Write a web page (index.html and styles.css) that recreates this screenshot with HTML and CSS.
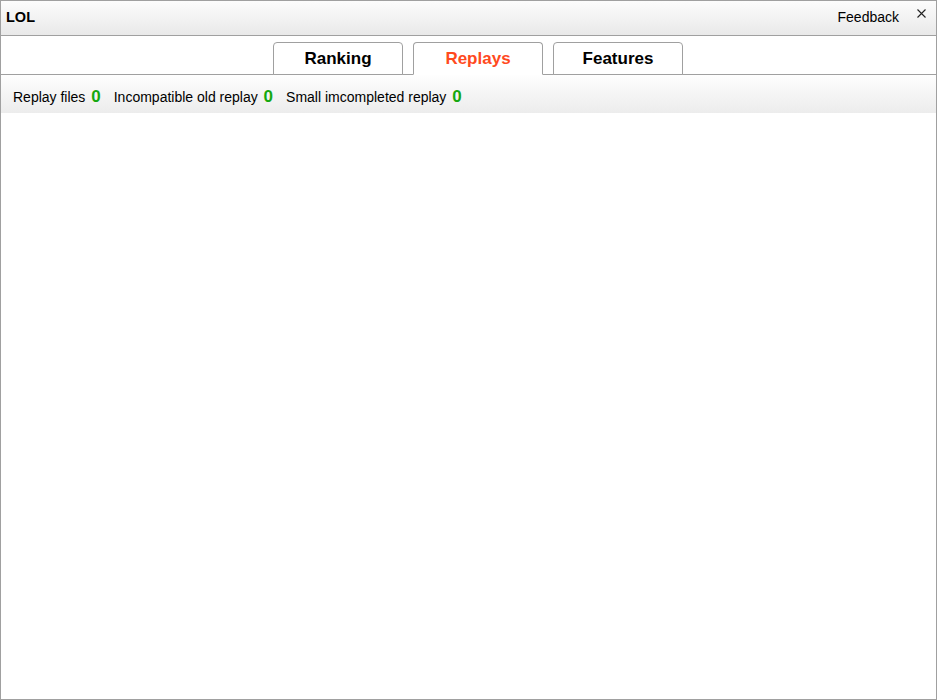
FILE: index.html
```html
<!DOCTYPE html>
<html lang="en">
<head>
<meta charset="UTF-8" />
<title>LOL</title>
<link rel="stylesheet" href="styles.css">
</head>
<body>
<div class="window">
  <div class="titlebar">
    <span class="title">LOL</span>
    <span class="feedback">Feedback</span>
    <span class="close" aria-label="Close">
      <svg width="9" height="9" viewBox="0 0 9 9"><path d="M0.5 0.5 L8.5 8.5 M8.5 0.5 L0.5 8.5" stroke="#222" stroke-width="1.1" fill="none"/></svg>
    </span>
  </div>
  <div class="tabs">
    <div class="tab">Ranking</div>
    <div class="tab active">Replays</div>
    <div class="tab">Features</div>
  </div>
  <div class="stats">
    <span class="stat">Replay files <b>0</b></span>
    <span class="stat">Incompatible old replay <b>0</b></span>
    <span class="stat">Small imcompleted replay <b>0</b></span>
  </div>
  <div class="content"></div>
</div>
</body>
</html>
```
FILE: styles.css
```css
* {
  box-sizing: border-box;
}
body {
  margin: 0;
  font-family: "Liberation Sans", Arial, sans-serif;
  color: #000;
  background: #fff;
}
.window {
  width: 937px;
  height: 700px;
  border: 1px solid #a0a0a0;
  display: flex;
  flex-direction: column;
  background: #fff;
}
.titlebar {
  height: 35px;
  flex: none;
  display: flex;
  align-items: flex-start;
  border-bottom: 1px solid #a0a0a0;
  background: linear-gradient(#fcfcfc, #e9e9e9);
}
.title {
  font-weight: 700;
  font-size: 14.5px;
  margin: 8px 0 0 5px;
}
.feedback {
  margin: 8px 0 0 auto;
  font-size: 14px;
}
.close {
  display: flex;
  margin: 8px 10px 0 18px;
}
.tabs {
  height: 39px;
  flex: none;
  display: flex;
  justify-content: center;
  align-items: flex-end;
  gap: 10px;
  padding-left: 19px;
  border-bottom: 1px solid #a0a0a0;
}
.tab {
  width: 130px;
  height: 33px;
  margin-bottom: -1px;
  border: 1px solid #a0a0a0;
  border-radius: 4px 4px 0 0;
  background: #fff;
  font-weight: 700;
  font-size: 17px;
  text-align: center;
  padding-top: 6px;
}
.tab.active {
  color: #ff4a1e;
  border-bottom-color: #fff;
}
.stats {
  height: 38px;
  flex: none;
  display: flex;
  align-items: center;
  gap: 13px;
  padding: 5px 0 0 12px;
  font-size: 14px;
  background: linear-gradient(#fefefe, #ececec);
}
.stat b {
  color: #15a80f;
  font-size: 17px;
  margin-left: 2px;
}
.content {
  flex: 1;
}
```
